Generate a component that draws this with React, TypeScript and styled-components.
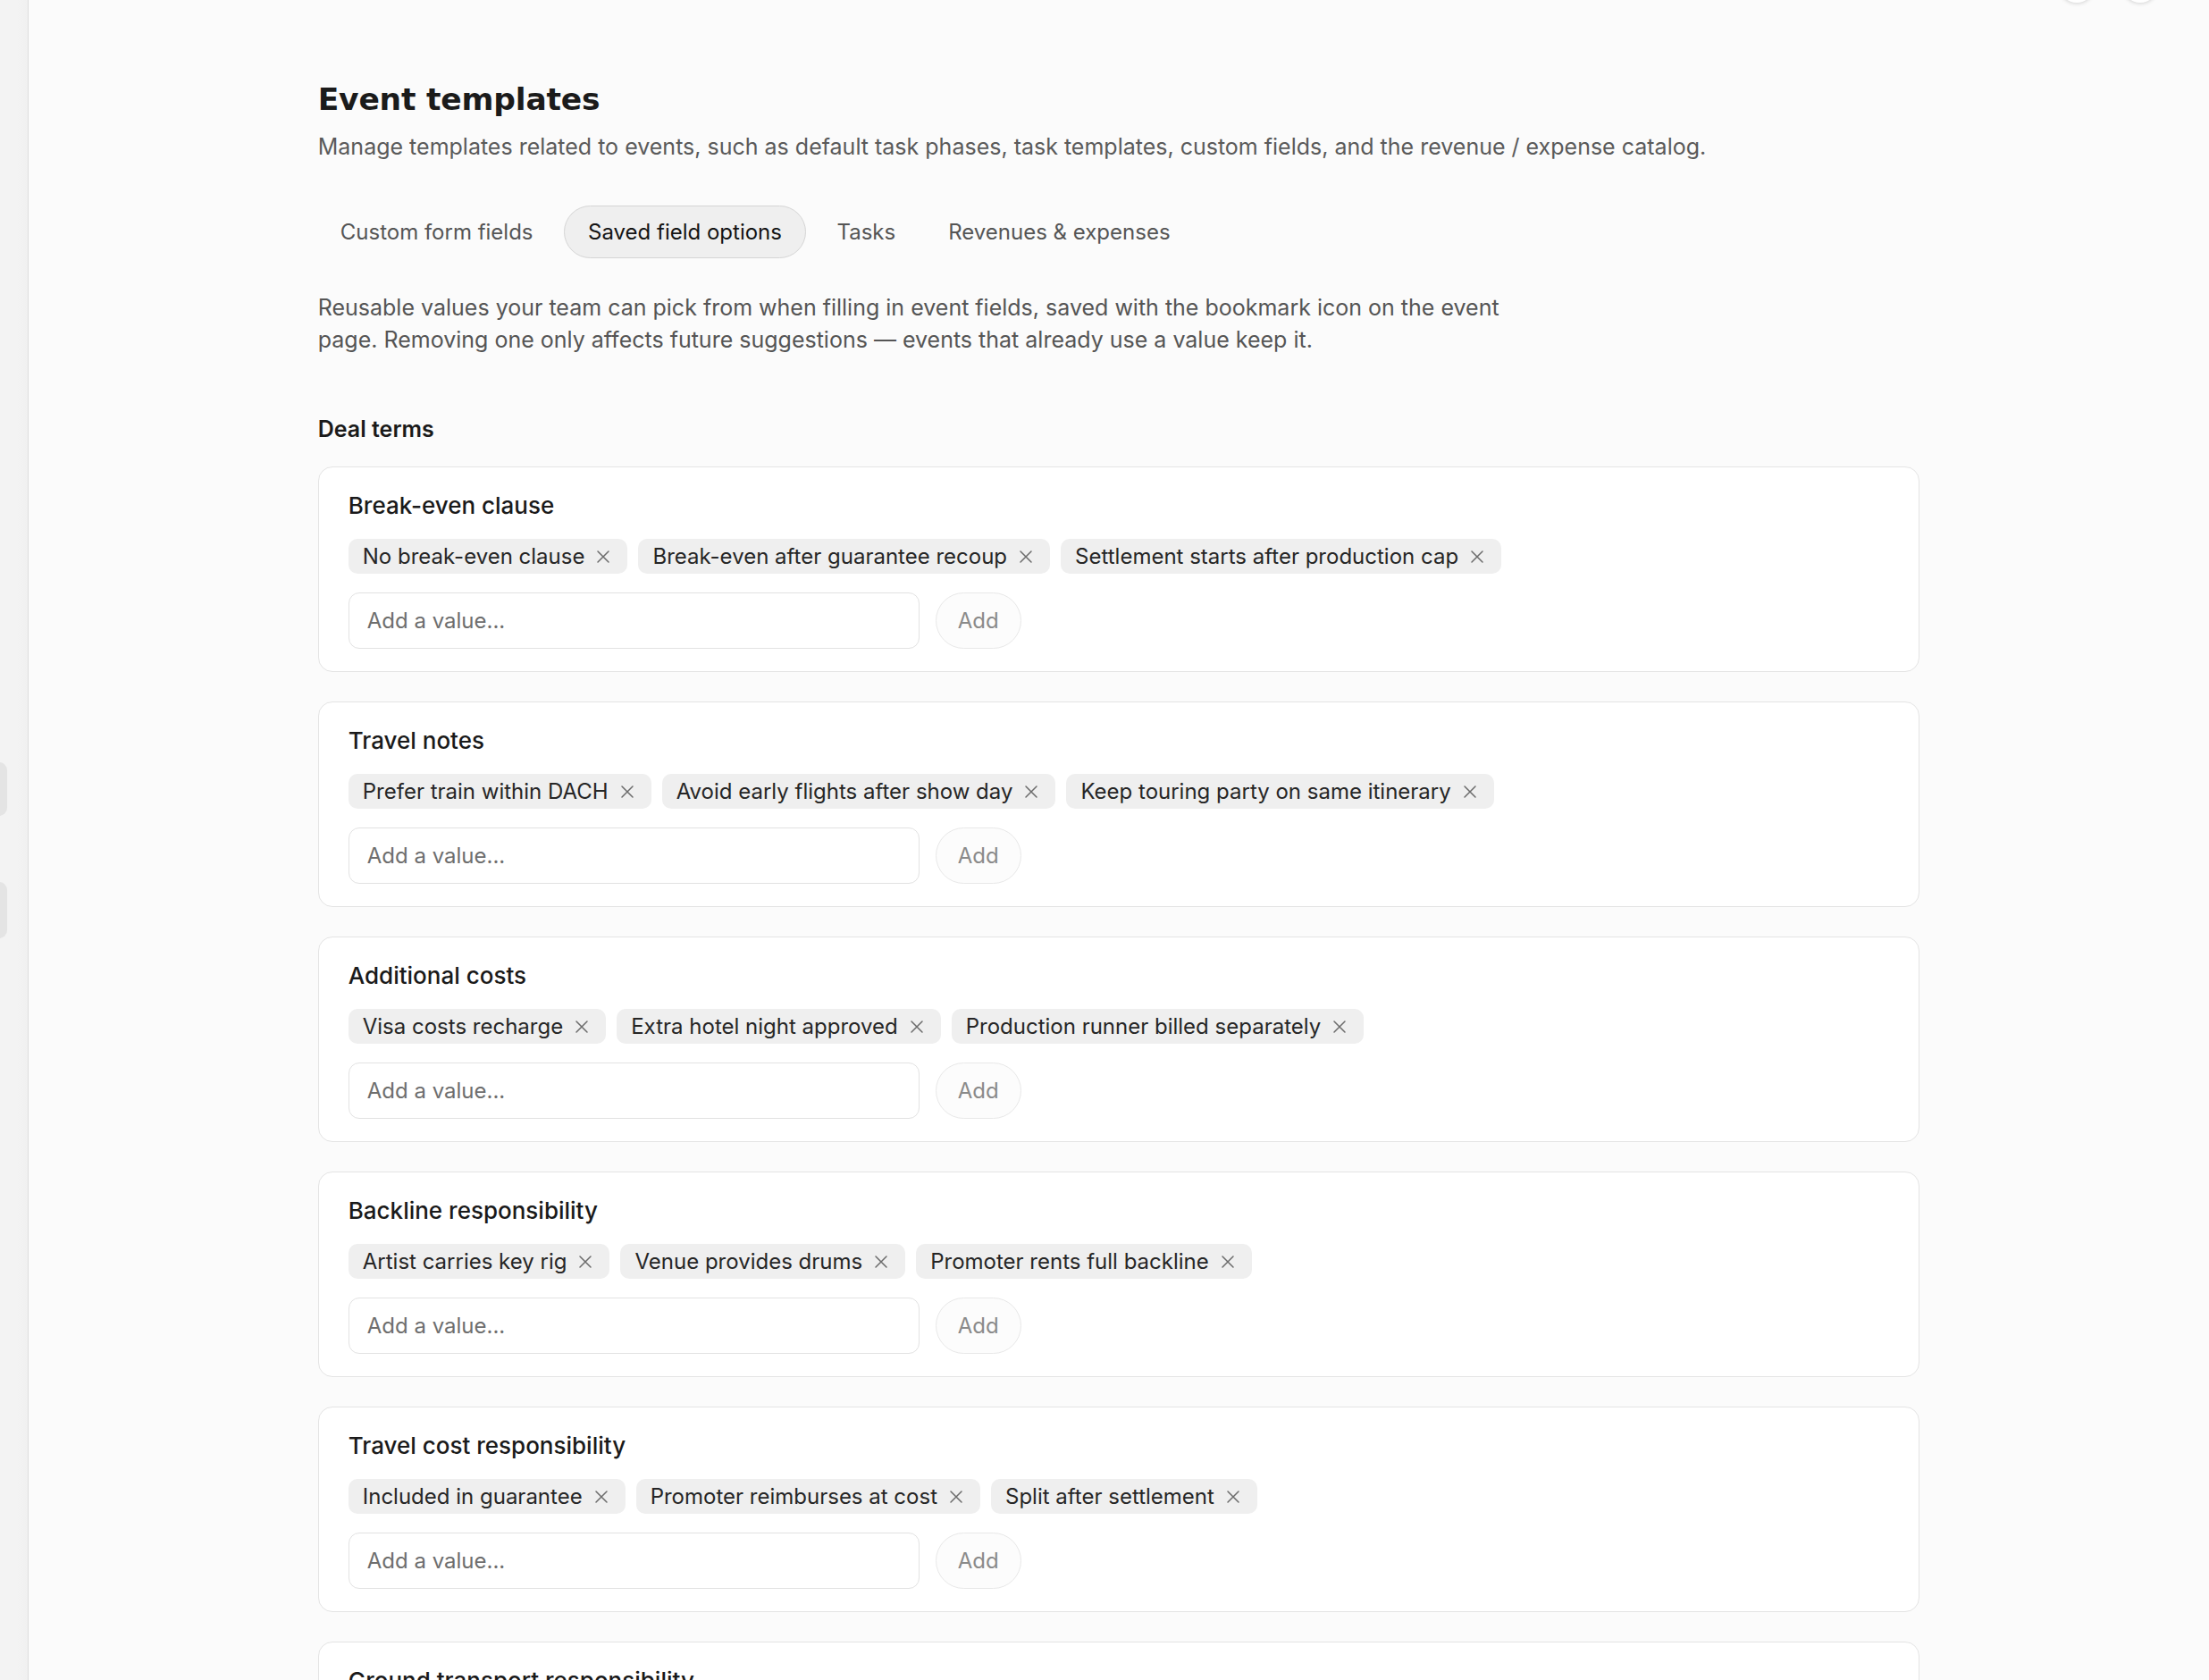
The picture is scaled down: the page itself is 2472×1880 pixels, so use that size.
import React from 'react';
import styled, { createGlobalStyle } from 'styled-components';

const GlobalStyle = createGlobalStyle`
  html, body {
    margin: 0;
    padding: 0;
    height: 100%;
    overflow: hidden;
    background: #fbfbfb;
  }

  body {
    font-family: Inter, "Noto Sans", "Liberation Sans", sans-serif;
    color: #1a1a1a;
  }

  * {
    box-sizing: border-box;
  }
`;

const Shell = styled.div`
  display: flex;
  height: 100vh;
  overflow: hidden;
`;

const Sidebar = styled.aside`
  width: 31.5px;
  flex-shrink: 0;
  background: linear-gradient(to right, #f3f3f3 60%, #f0f0f0);
  border-right: 1.5px solid #dddddd;
  display: flex;
  flex-direction: column;
  gap: 74px;
  padding-top: 853px;
  overflow: hidden;
`;

const SideItem = styled.div<{ $h: number }>`
  width: 30px;
  height: ${p => p.$h}px;
  margin-left: -22px;
  border-radius: 9px;
  background: #e4e4e4;
`;

const Main = styled.main`
  flex: 1;
  display: flex;
  flex-direction: column;
  overflow: hidden;
  background: #fbfbfb;
`;

const TopBar = styled.div`
  display: flex;
  justify-content: flex-end;
  gap: 31px;
  height: 40px;
  margin-top: -37px;
  padding-right: 57px;
`;

const RoundButton = styled.div`
  width: 40px;
  height: 40px;
  border-radius: 50%;
  background: #ffffff;
  box-shadow: 0 1px 4px rgba(0, 0, 0, 0.16);
`;

const Content = styled.div`
  width: 100%;
  max-width: 1792px;
  margin: 0 auto;
  padding-top: 86px;
`;

const PageTitle = styled.h1`
  margin: 0;
  font-family: "DejaVu Sans", Inter, sans-serif;
  font-size: 34.5px;
  line-height: 44px;
  font-weight: 700;
  letter-spacing: -0.2px;
  color: #1b1b1b;
`;

const PageDescription = styled.p`
  margin: 15px 0 0;
  font-size: 25px;
  line-height: 33px;
  color: #5a5a5a;
`;

const Tabs = styled.nav`
  display: flex;
  align-items: center;
  gap: 9px;
  margin-top: 49px;
`;

const Tab = styled.button<{ $active?: boolean }>`
  height: 59px;
  padding: 0 ${p => (p.$active ? 26.5 : 24)}px;
  display: inline-flex;
  align-items: center;
  border-radius: 999px;
  font-family: inherit;
  font-size: 24px;
  font-weight: 400;
  color: ${p => (p.$active ? '#141414' : '#555555')};
  background: ${p => (p.$active ? '#efefef' : 'transparent')};
  border: 1.5px solid ${p => (p.$active ? '#d5d5d5' : 'transparent')};
  cursor: pointer;
`;

const Intro = styled.p`
  margin: 37px 0 0;
  max-width: 1350px;
  font-size: 25px;
  line-height: 36px;
  color: #555555;
`;

const GroupTitle = styled.h2`
  margin: 66px 0 0;
  font-size: 25px;
  line-height: 33px;
  font-weight: 600;
  color: #1a1a1a;
`;

const CardList = styled.div`
  display: flex;
  flex-direction: column;
  gap: 33px;
  margin-top: 25px;
`;

const Card = styled.section`
  background: #ffffff;
  border: 1.5px solid #e4e4e4;
  border-radius: 16px;
  padding: 24px 32px 25px 33px;
`;

const CardTitle = styled.h3`
  margin: 0;
  font-size: 26px;
  line-height: 37px;
  font-weight: 500;
  color: #1a1a1a;
`;

const ChipRow = styled.div`
  display: flex;
  flex-wrap: wrap;
  gap: 12px;
  margin-top: 19px;
`;

const Chip = styled.span`
  display: inline-flex;
  align-items: center;
  gap: 13px;
  height: 39px;
  padding: 0 19px 0 16px;
  border-radius: 10px;
  background: #efefef;
  font-size: 24px;
  color: #262626;
  white-space: nowrap;
`;

const RemoveIcon = styled.svg`
  width: 16px;
  height: 16px;
  flex-shrink: 0;
  color: #6b6b6b;
`;

const AddRow = styled.div`
  display: flex;
  align-items: center;
  gap: 18px;
  margin-top: 21px;
`;

const ValueInput = styled.input`
  width: 639px;
  height: 63px;
  padding: 0 20px;
  border: 1.5px solid #e2e2e2;
  border-radius: 12px;
  background: #ffffff;
  font-family: inherit;
  font-size: 24px;
  color: #1a1a1a;
  outline: none;

  &::placeholder {
    color: #6e6e6e;
  }
`;

const AddButton = styled.button`
  width: 96px;
  height: 63px;
  border-radius: 999px;
  border: 1.5px solid #e8e8e8;
  background: #fcfcfc;
  font-family: inherit;
  font-size: 24px;
  color: #8a8a8a;
  cursor: pointer;
`;

const XIcon: React.FC = () => (
  <RemoveIcon viewBox="0 0 16 16" fill="none" stroke="currentColor" strokeWidth="1.5" strokeLinecap="round">
    <path d="M2 2 14 14M14 2 2 14" />
  </RemoveIcon>
);

const tabs = ['Custom form fields', 'Saved field options', 'Tasks', 'Revenues & expenses'];

const fields = [
  {
    title: 'Break-even clause',
    values: ['No break-even clause', 'Break-even after guarantee recoup', 'Settlement starts after production cap'],
  },
  {
    title: 'Travel notes',
    values: ['Prefer train within DACH', 'Avoid early flights after show day', 'Keep touring party on same itinerary'],
  },
  {
    title: 'Additional costs',
    values: ['Visa costs recharge', 'Extra hotel night approved', 'Production runner billed separately'],
  },
  {
    title: 'Backline responsibility',
    values: ['Artist carries key rig', 'Venue provides drums', 'Promoter rents full backline'],
  },
  {
    title: 'Travel cost responsibility',
    values: ['Included in guarantee', 'Promoter reimburses at cost', 'Split after settlement'],
  },
  {
    title: 'Ground transport responsibility',
    values: ['Promoter provides runner', 'Local shuttle on show day', 'Artist arranges own transport'],
  },
];

const App: React.FC = () => {
  return (
    <>
      <GlobalStyle />
      <Shell>
        <Sidebar>
          <SideItem $h={60} />
          <SideItem $h={63} />
        </Sidebar>
        <Main>
          <TopBar>
            <RoundButton />
            <RoundButton />
          </TopBar>
          <Content>
            <PageTitle>Event templates</PageTitle>
            <PageDescription>
              Manage templates related to events, such as default task phases, task templates, custom fields, and the
              revenue / expense catalog.
            </PageDescription>

            <Tabs>
              {tabs.map(tab => (
                <Tab key={tab} $active={tab === 'Saved field options'}>
                  {tab}
                </Tab>
              ))}
            </Tabs>

            <Intro>
              Reusable values your team can pick from when filling in event fields, saved with the bookmark icon on the
              event page. Removing one only affects future suggestions — events that already use a value keep it.
            </Intro>

            <GroupTitle>Deal terms</GroupTitle>
            <CardList>
              {fields.map(field => (
                <Card key={field.title}>
                  <CardTitle>{field.title}</CardTitle>
                  <ChipRow>
                    {field.values.map(value => (
                      <Chip key={value}>
                        {value}
                        <XIcon />
                      </Chip>
                    ))}
                  </ChipRow>
                  <AddRow>
                    <ValueInput placeholder="Add a value..." />
                    <AddButton>Add</AddButton>
                  </AddRow>
                </Card>
              ))}
            </CardList>
          </Content>
        </Main>
      </Shell>
    </>
  );
};

export default App;
